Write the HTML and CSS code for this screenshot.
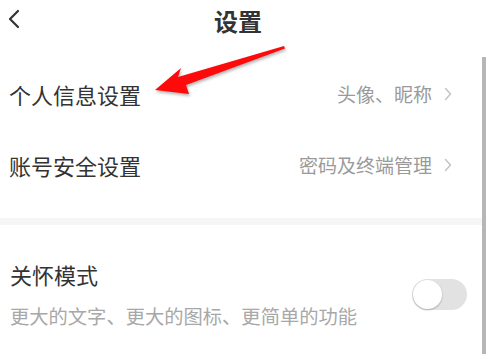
FILE: index.html
```html
<!DOCTYPE html>
<html lang="zh-CN">
<head>
<meta charset="utf-8">
<link rel="stylesheet" href="styles.css">
</head>
<body>
<div class="page">
  <header class="topbar">
    <span class="back">
      <svg width="14" height="20" viewBox="0 0 14 20"><path d="M11 2 L3 10 L11 18" fill="none" stroke="#333" stroke-width="2.2" stroke-linecap="round" stroke-linejoin="round"/></svg>
    </span>
    <h1 class="title">设置</h1>
  </header>
  <div class="list">
    <div class="row">
      <span class="row-label">个人信息设置</span>
      <span class="row-value">头像、昵称</span>
      <svg class="chev" width="8" height="14" viewBox="0 0 8 14"><path d="M1.5 1.5 L6.5 7 L1.5 12.5" fill="none" stroke="#c2c2c2" stroke-width="1.4" stroke-linecap="round" stroke-linejoin="round"/></svg>
    </div>
    <div class="row">
      <span class="row-label">账号安全设置</span>
      <span class="row-value">密码及终端管理</span>
      <svg class="chev" width="8" height="14" viewBox="0 0 8 14"><path d="M1.5 1.5 L6.5 7 L1.5 12.5" fill="none" stroke="#c2c2c2" stroke-width="1.4" stroke-linecap="round" stroke-linejoin="round"/></svg>
    </div>
  </div>
  <div class="band"></div>
  <div class="care">
    <div class="care-text">
      <div class="care-title">关怀模式</div>
      <div class="care-sub">更大的文字、更大的图标、更简单的功能</div>
    </div>
    <div class="toggle"><span class="knob"></span></div>
  </div>
  <div class="scrollbar"></div>
  <svg class="arrow" width="486" height="130" viewBox="0 0 486 130">
    <polygon points="155,90 181,68 178,77 284,46 285,48.5 186,85 189,94" fill="#ff0a0a"/>
  </svg>
</div>
</body>
</html>
```

FILE: styles.css
```css
html, body {
  margin: 0;
  padding: 0;
  background: #fff;
}
body {
  font-family: "Noto Sans CJK SC", "Noto Sans", sans-serif;
  color: #333;
}
.page {
  position: relative;
  width: 486px;
  height: 354px;
  overflow: hidden;
}
.topbar {
  position: relative;
  height: 42px;
  display: flex;
  align-items: center;
  justify-content: center;
  padding-right: 10px;
}
.back {
  position: absolute;
  left: 7px;
  top: 9px;
  display: flex;
}
.title {
  margin: 0;
  font-size: 24px;
  font-weight: 700;
  line-height: 40px;
  color: #333;
}
.list {
  padding-top: 16px;
}
.row {
  height: 71px;
  display: flex;
  align-items: center;
  padding: 0 34px 0 9px;
}
.row-label {
  font-size: 22px;
  line-height: 30px;
  color: #333;
  flex: 1;
}
.row-value {
  font-size: 19px;
  line-height: 26px;
  color: #9a9a9a;
  margin-right: 12px;
}
.chev {
  display: block;
}
.band {
  margin-top: 18px;
  height: 7px;
  background: #f6f6f6;
}
.care {
  display: flex;
  align-items: center;
  padding: 34px 19px 0 10px;
}
.care-text {
  flex: 1;
}
.care-title {
  font-size: 22px;
  line-height: 30px;
  color: #333;
}
.care-sub {
  margin-top: 14px;
  font-size: 19.3px;
  line-height: 26px;
  color: #a8a8a8;
}
.toggle {
  position: relative;
  width: 55px;
  height: 31px;
  border-radius: 16px;
  background: #e2e2e2;
}
.knob {
  position: absolute;
  left: 1px;
  top: 1px;
  width: 29px;
  height: 29px;
  border-radius: 50%;
  background: #fff;
  box-shadow: 0 1px 2px rgba(0,0,0,0.25);
}
.scrollbar {
  position: absolute;
  right: 0;
  top: 57px;
  bottom: 0;
  width: 4px;
  background: #b6b6b6;
}
.arrow {
  position: absolute;
  left: 0;
  top: 0;
  filter: drop-shadow(1px 2px 1.5px rgba(0,0,0,0.3));
}
```
